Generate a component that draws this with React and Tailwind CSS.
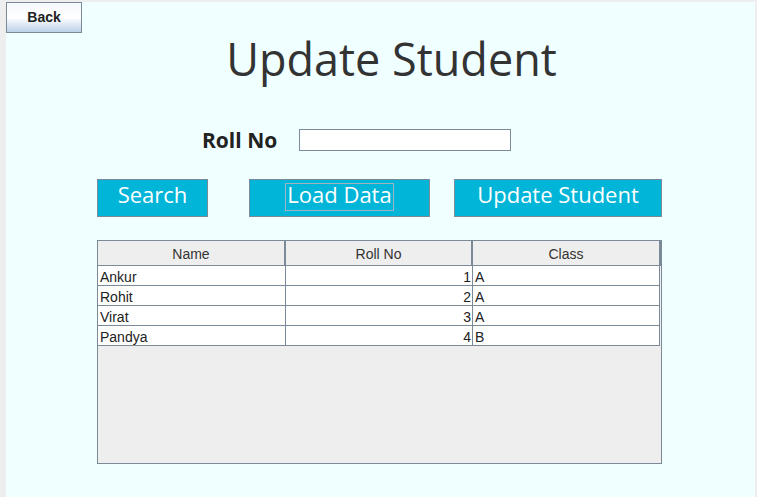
const ROWS = [
  { name: 'Ankur', roll: 1, cls: 'A' },
  { name: 'Rohit', roll: 2, cls: 'A' },
  { name: 'Virat', roll: 3, cls: 'A' },
  { name: 'Pandya', roll: 4, cls: 'B' },
]

const ui = { fontFamily: '"Open Sans", "Noto Sans", sans-serif' }
const arial = { fontFamily: '"Liberation Sans", Arial, sans-serif' }

export default function App() {
  return (
    <div className="w-[757px] h-[497px] bg-[#eeeeee] pt-[2px] pl-[6px] pr-[2px] flex overflow-hidden">
      <div className="flex-1 bg-[#f0ffff] flex flex-col">
        {/* Back */}
        <button
          style={arial}
          className="w-[76px] h-[31px] shrink-0 border border-[#7a8a99] bg-gradient-to-b from-[#f4f8fc] via-white to-[#bcd1e8] text-[14px] font-bold text-[#222]"
        >
          Back
        </button>

        {/* Title */}
        <div style={ui} className="h-[67px] flex items-center justify-center pl-[22px] pb-[16px] text-[45px] leading-none text-[#333]">
          Update Student
        </div>

        {/* Roll No */}
        <div className="mt-[29px] h-[22px] flex items-center pl-[196px]">
          <label style={ui} className="w-[97px] text-[21px] font-bold text-[#222] pt-[2px]">Roll No</label>
          <input className="w-[212px] h-[22px] bg-white border border-[#7a8a99] outline-none" />
        </div>

        {/* Buttons */}
        <div style={ui} className="mt-[28px] h-[38px] flex pl-[91px] text-[22px] font-medium text-white">
          <button className="w-[111px] h-full bg-[#00b5d8] border border-[#7a8a99] leading-none pb-[8px]">Search</button>
          <button className="ml-[41px] w-[181px] h-full bg-[#00b5d8] border border-[#7a8a99] flex justify-center pt-[3px]">
            <span className="border border-[#9fb3c4] px-[1px] h-[28px] leading-[21px]">Load Data</span>
          </button>
          <button className="ml-[24px] w-[208px] h-full bg-[#00b5d8] border border-[#7a8a99] leading-none pb-[8px]">Update Student</button>
        </div>

        {/* Table */}
        <div style={arial} className="mt-[23px] ml-[91px] w-[565px] h-[224px] border border-[#7a8a99] bg-[#eeeeee] text-[14px] text-[#222]">
          <div className="grid grid-cols-[188px_187px_188px] h-[25px] border-b border-[#7a8a99] text-[#333]">
            {['Name', 'Roll No', 'Class'].map((h) => (
              <div key={h} className="border-r-2 border-[#7a8a99] flex items-center justify-center pt-[3px]">
                {h}
              </div>
            ))}
          </div>
          {ROWS.map((r) => (
            <div key={r.name} className="grid grid-cols-[188px_187px_187px] h-[20px] overflow-hidden bg-white border-b border-[#7a8a99] w-[562px] border-r">
              <div className="border-r border-[#7a8a99] pl-[2px] leading-[22px]">{r.name}</div>
              <div className="border-r border-[#7a8a99] pr-[1px] text-right leading-[22px]">{r.roll}</div>
              <div className="pl-[2px] leading-[22px]">{r.cls}</div>
            </div>
          ))}
        </div>
      </div>
    </div>
  )
}
